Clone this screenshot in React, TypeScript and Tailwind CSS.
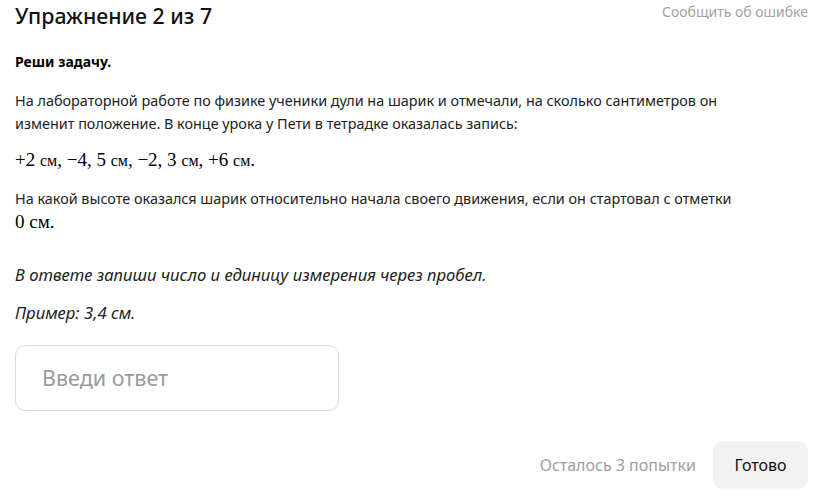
import React from "react";

export default function App() {
  const sans = { fontFamily: '"Noto Sans", "Open Sans", sans-serif' };
  const serif = { fontFamily: '"Liberation Serif", "DejaVu Serif", serif' };
  return (
    <div className="w-[823px] h-[499px] bg-white text-[#222] relative overflow-hidden" style={sans}>
      <div className="px-[15px]">
        <div className="flex items-start justify-between">
          <h1 className="text-[21.3px] leading-[32px] font-medium text-[#111]">Упражнение 2 из 7</h1>
          <span className="text-[14px] leading-[24px] text-[#a3a3a3]">Сообщить об ошибке</span>
        </div>
        <p className="mt-[19px] text-[14px] leading-[22px] font-bold text-black">Реши задачу.</p>
        <p className="mt-[16px] text-[14.4px] leading-[23px] w-[725px]">
          На лабораторной работе по физике ученики дули на шарик и отмечали, на сколько сантиметров он изменит положение. В конце урока у Пети в тетрадке оказалась запись:
        </p>
        <p className="mt-[13px] text-[19px] leading-[24px] text-black" style={serif}>
          +2 <span className="text-[16px]">см</span>, −4, 5 <span className="text-[16px]">см</span>, −2, 3 <span className="text-[16px]">см</span>, +6 <span className="text-[16px]">см</span>.
        </p>
        <p className="mt-[16px] text-[14.4px] leading-[20px] w-[725px]">
          На какой высоте оказался шарик относительно начала своего движения, если он стартовал с отметки
        </p>
        <p className="mt-[2px] text-[19px] leading-[22px] text-black" style={serif}>0 см.</p>
        <p className="mt-[30px] text-[16.7px] leading-[24px] italic">В ответе запиши число и единицу измерения через пробел.</p>
        <p className="mt-[14px] text-[16.7px] leading-[24px] italic">Пример: 3,4 см.</p>
        <div className="mt-[20px] w-[324px] h-[66px] rounded-[10px] border border-[#d9d9d9] flex items-center px-[26px]">
          <span className="text-[21.5px] text-[#9a9a9a]">Введи ответ</span>
        </div>
        <div className="mt-[30px] flex items-center justify-end gap-[17px]">
          <span className="text-[16px] text-[#a0a0a0]">Осталось 3 попытки</span>
          <button className="w-[95px] h-[48px] rounded-[10px] bg-[#f2f2f2] text-[16px] text-[#111]">Готово</button>
        </div>
      </div>
    </div>
  );
}
